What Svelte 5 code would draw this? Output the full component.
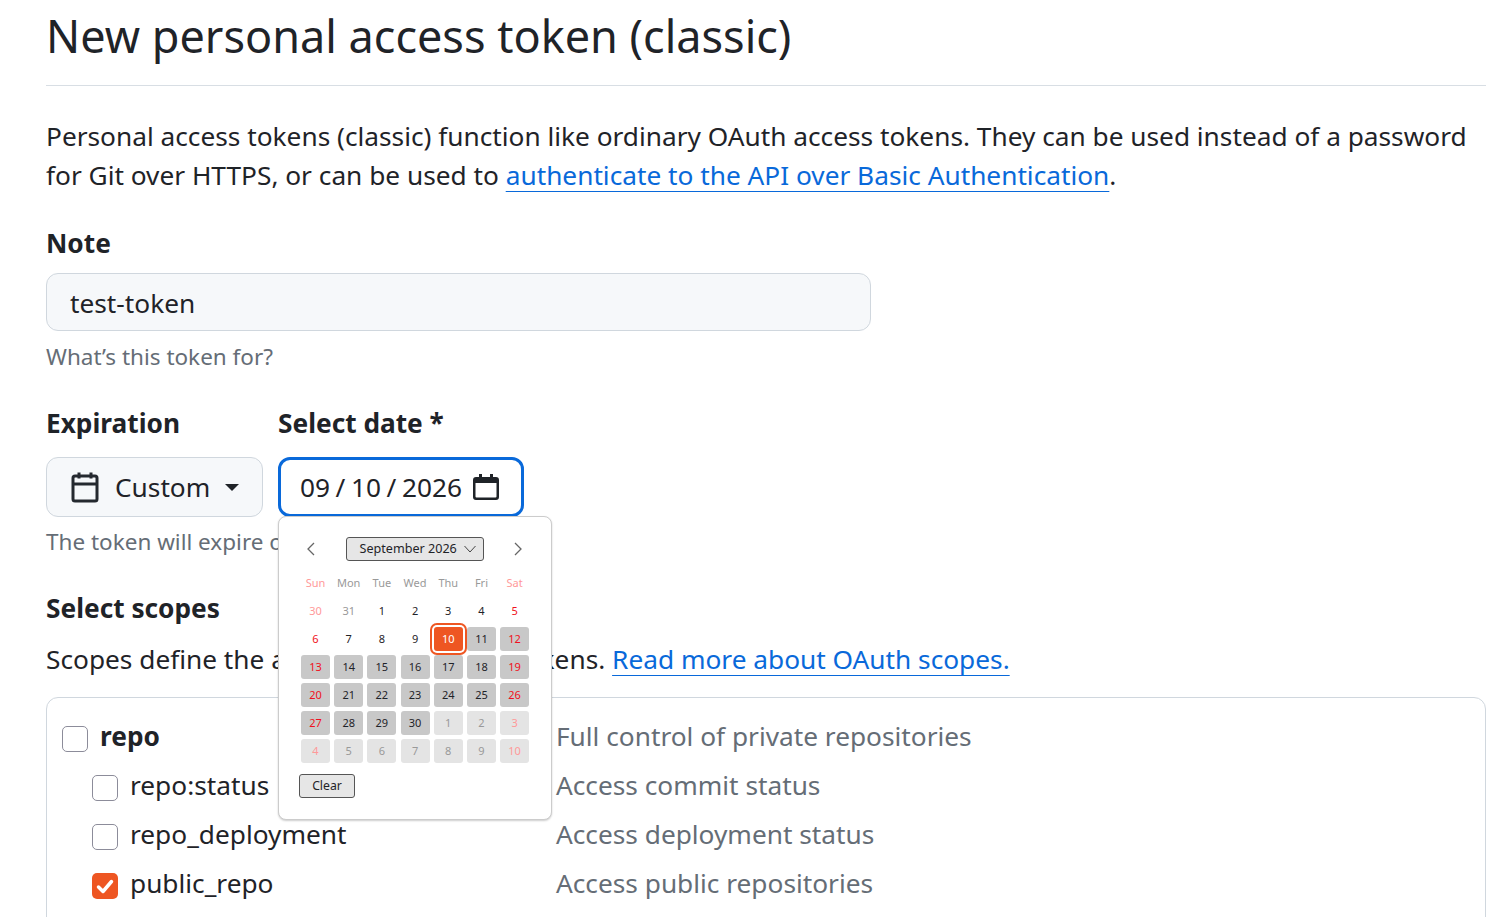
<script>
  const weeks = [
    [[30, 'out'], [31, 'out'], [1, ''], [2, ''], [3, ''], [4, ''], [5, '']],
    [[6, ''], [7, ''], [8, ''], [9, ''], [10, 'sel'], [11, 'range'], [12, 'range']],
    [[13, 'range'], [14, 'range'], [15, 'range'], [16, 'range'], [17, 'range'], [18, 'range'], [19, 'range']],
    [[20, 'range'], [21, 'range'], [22, 'range'], [23, 'range'], [24, 'range'], [25, 'range'], [26, 'range']],
    [[27, 'range'], [28, 'range'], [29, 'range'], [30, 'range'], [1, 'next'], [2, 'next'], [3, 'next']],
    [[4, 'next'], [5, 'next'], [6, 'next'], [7, 'next'], [8, 'next'], [9, 'next'], [10, 'next']]
  ]
  const days = ['Sun', 'Mon', 'Tue', 'Wed', 'Thu', 'Fri', 'Sat']
  const scopes = [
    { name: 'repo', desc: 'Full control of private repositories', top: true },
    { name: 'repo:status', desc: 'Access commit status' },
    { name: 'repo_deployment', desc: 'Access deployment status' },
    { name: 'public_repo', desc: 'Access public repositories', checked: true }
  ]
</script>

<main>
  <h1>New personal access token (classic)</h1>
  <p class="intro">
    Personal access tokens (classic) function like ordinary OAuth access tokens. They can be used instead of a password
    for Git over HTTPS, or can be used to <a href="#api">authenticate to the API over Basic Authentication</a>.
  </p>

  <label class="lbl note-lbl" for="note">Note</label>
  <div id="note" class="note">test-token</div>
  <p class="hint">What’s this token for?</p>

  <div class="exp-row">
    <div class="exp-col">
      <div class="lbl">Expiration</div>
      <button class="custom">
        <svg width="28" height="32" viewBox="0 0 28 32" fill="none" stroke="#24292f" stroke-width="3">
          <path d="M8 1.500v6M20 1.500v6" />
          <rect x="2" y="5" width="24" height="25" rx="2" />
          <path d="M2 13h24" />
        </svg>
        <span>Custom</span>
        <i class="caret"></i>
      </button>
    </div>
    <div class="date-col">
      <div class="lbl">Select date *</div>
      <div class="date-input">
        <span>09 / 10 / 2026</span>
        <svg width="28" height="28" viewBox="0 0 28 28">
          <path fill="#1f2328" d="M7 1h3v3h8V1h3v3h3a3 3 0 0 1 3 3v17a3 3 0 0 1-3 3H4a3 3 0 0 1-3-3V7a3 3 0 0 1 3-3h3zM3.500 10v13.500a1 1 0 0 0 1 1h19a1 1 0 0 0 1-1V10z" />
        </svg>
      </div>
    </div>
  </div>
  <p class="hint expire">The token will expire on the selected date</p>

  <div class="lbl scopes-lbl">Select scopes</div>
  <p class="scopes-text">
    Scopes define the access for personal tokens. <a href="#scopes">Read more about OAuth scopes.</a>
  </p>

  <div class="scopes">
    {#each scopes as s}
      <div class="scope" class:top={s.top}>
        <div class="scope-name">
          <span class="check" class:checked={s.checked}>
            {#if s.checked}
              <svg width="26" height="26" viewBox="0 0 26 26" fill="none" stroke="#fff" stroke-width="3.500" stroke-linecap="round" stroke-linejoin="round">
                <path d="M6.500 14l4.500 4.500 8.500-10" />
              </svg>
            {/if}
          </span>
          <span>{s.name}</span>
        </div>
        <div class="scope-desc">{s.desc}</div>
      </div>
    {/each}
  </div>

  <div class="picker">
    <div class="picker-head">
      <svg class="nav" width="10" height="14" viewBox="0 0 10 14" fill="none" stroke="#666" stroke-width="1.300"><path d="M8 1L2 7l6 6" /></svg>
      <div class="month">
        <span>September 2026</span>
        <svg width="12" height="8" viewBox="0 0 12 8" fill="none" stroke="#444" stroke-width="1"><path d="M0.500 1l5.500 6 5.500-6" /></svg>
      </div>
      <svg class="nav" width="10" height="14" viewBox="0 0 10 14" fill="none" stroke="#666" stroke-width="1.300"><path d="M2 1l6 6-6 6" /></svg>
    </div>
    <div class="grid">
      {#each days as d, i}
        <div class="dow" class:weekend={i === 0 || i === 6}>{d}</div>
      {/each}
      {#each weeks as week}
        {#each week as [n, kind], i}
          <div class="day {kind}" class:weekend={i === 0 || i === 6}>{n}</div>
        {/each}
      {/each}
    </div>
    <button class="clear">Clear</button>
  </div>
</main>

<style>
  :global(body) {
    background: #fff;
    overflow: hidden;
  }

  main {
    position: relative;
    height: 917px;
    overflow: hidden;
    padding: 0 18px 0 46px;
    font-family: "Noto Sans", sans-serif;
    color: #1f2328;
    box-sizing: border-box;
  }

  h1 {
    margin: 0;
    height: 85px;
    font-size: 45px;
    font-weight: 400;
    line-height: 72px;
    border-bottom: 1px solid #d8dee4;
  }

  p {
    margin: 0;
  }

  a {
    color: #0969da;
    text-decoration: underline 1px;
    text-underline-offset: 6px;
  }

  .intro {
    margin-top: 31px;
    font-size: 26.250px;
    line-height: 39px;
  }

  .lbl {
    display: block;
    font-size: 26.250px;
    font-weight: 700;
    line-height: 36px;
  }

  .note-lbl {
    margin-top: 30px;
  }

  .note {
    box-sizing: border-box;
    width: 825px;
    height: 58px;
    margin-top: 12px;
    padding: 0 23px;
    font-size: 26.250px;
    line-height: 58px;
    background: #f6f8fa;
    border: 1px solid #d0d7de;
    border-radius: 12px;
  }

  .hint {
    font-size: 22.500px;
    line-height: 36px;
    color: #656d76;
    white-space: nowrap;
  }

  .note + .hint {
    margin-top: 8px;
  }

  .exp-row {
    display: flex;
    gap: 15px;
    margin-top: 30px;
  }

  .exp-col .lbl,
  .date-col .lbl {
    margin-bottom: 16px;
  }

  .custom {
    display: flex;
    align-items: center;
    box-sizing: border-box;
    width: 217px;
    height: 60px;
    padding: 0 0 0 24px;
    font: inherit;
    font-size: 26.250px;
    color: #1f2328;
    background: #f6f8fa;
    border: 1px solid #d0d7de;
    border-radius: 12px;
  }

  .custom span {
    margin-left: 16px;
  }

  .caret {
    margin-left: 15px;
    border: 7px solid transparent;
    border-top: 7px solid #1f2328;
    border-bottom: 0;
  }

  .date-input {
    display: flex;
    align-items: center;
    justify-content: space-between;
    box-sizing: border-box;
    width: 246px;
    height: 60px;
    padding: 0 21px 0 19px;
    font-size: 26.250px;
    border: 3px solid #0969da;
    border-radius: 12px;
  }

  .date-input span {
    white-space: nowrap;
    word-spacing: -1.250px;
  }

  .expire {
    margin-top: 7px;
  }

  .scopes-lbl {
    margin-top: 30px;
  }

  .scopes-text {
    margin-top: 14px;
    font-size: 26.250px;
    line-height: 39px;
    white-space: nowrap;
  }

  .scopes {
    box-sizing: border-box;
    height: 260px;
    margin-top: 18px;
    padding: 15px 15px 0;
    border: 1px solid #d0d7de;
    border-radius: 12px;
  }

  .scope {
    display: flex;
    align-items: center;
    height: 49px;
    font-size: 26.250px;
    margin-top: -2px;
    margin-bottom: 2px;
  }

  .scope-name {
    flex: none;
    display: flex;
    align-items: center;
    gap: 12px;
    width: 494px;
    padding-left: 30px;
    box-sizing: border-box;
  }

  .scope.top .scope-name {
    padding-left: 0;
    font-weight: 700;
  }

  .scope-desc {
    color: #656d76;
  }

  .check {
    flex: none;
    box-sizing: border-box;
    width: 26px;
    height: 26px;
    margin-top: 6px;
    background: #fff;
    border: 1px solid #8c8c9a;
    border-radius: 5px;
  }

  .check.checked {
    background: #ee5622;
    border: 0;
  }

  .check svg {
    display: block;
  }

  .picker {
    position: absolute;
    left: 278px;
    top: 516px;
    box-sizing: border-box;
    width: 274px;
    height: 304px;
    background: #fff;
    border: 1px solid #ccc;
    border-radius: 8px;
    box-shadow: 0 1px 2px rgba(0, 0, 0, 0.2);
  }

  .picker-head {
    display: flex;
    align-items: center;
    justify-content: space-between;
    padding: 20px 28px 0 27px;
  }

  .month {
    display: flex;
    align-items: center;
    gap: 7px;
    box-sizing: border-box;
    width: 138px;
    height: 24px;
    padding-left: 13px;
    font-size: 12.600px;
    line-height: 20px;
    background: #e6e6e6;
    border: 1px solid #555;
    border-radius: 3px;
  }

  .grid {
    display: grid;
    grid-template-columns: repeat(7, 29px);
    grid-auto-rows: 24px;
    column-gap: 4.200px;
    row-gap: 4px;
    margin: 10px 0 0 22px;
    font-size: 11px;
  }

  .dow,
  .day {
    display: flex;
    align-items: center;
    justify-content: center;
    box-sizing: border-box;
    padding-bottom: 2px;
    border-radius: 3px;
  }

  .dow {
    color: #999;
    font-size: 11px;
  }

  .dow.weekend {
    color: #f99;
  }

  .day.weekend {
    color: #f01020;
  }

  .day.out {
    color: #999;
  }

  .day.out.weekend {
    color: #f99;
  }

  .day.range {
    background: #c8c8c8;
  }

  .day.next {
    color: #999;
    background: #e4e4e4;
  }

  .day.next.weekend {
    color: #f99;
  }

  .day.sel {
    color: #fff;
    background: #ee5622;
    box-shadow: 0 0 0 2px #fff, 0 0 0 4px #ee5622;
  }

  .clear {
    display: block;
    box-sizing: border-box;
    width: 56px;
    height: 24px;
    margin: 11px 0 0 20px;
    padding: 0 0 2px;
    font: inherit;
    font-size: 12.250px;
    color: #1f2328;
    background: #e6e6e6;
    border: 1px solid #555;
    border-radius: 3px;
  }
</style>
